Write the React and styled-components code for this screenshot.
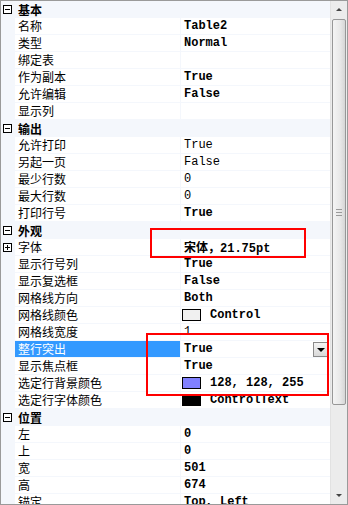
import React from "react";
import styled, { createGlobalStyle } from "styled-components";

const GlobalStyle = createGlobalStyle`
  html, body {
    margin: 0;
    padding: 0;
    background: #ffffff;
  }
`;

const LINE = "#f4f7fc";
const CJK = `"Noto Sans CJK SC", "Liberation Sans", sans-serif`;
const MONO = `"Liberation Mono", "Noto Sans CJK SC", monospace`;

const Frame = styled.div`
  position: relative;
  width: 348px;
  height: 505px;
  box-sizing: border-box;
  border: 1px solid #9a9a9a;
  display: flex;
  overflow: hidden;
  background: #fff;
`;

const Grid = styled.div`
  flex: 1;
  display: flex;
  flex-direction: column;
  overflow: hidden;
`;

const Row = styled.div`
  display: flex;
  height: 17px;
  flex-shrink: 0;
  background: ${(p) => (p.category ? LINE : "#fff")};
`;

const Gutter = styled.div`
  width: 14px;
  flex-shrink: 0;
  background: ${LINE};
  display: flex;
  align-items: center;
  padding-left: 2px;
  box-sizing: border-box;
`;

const Toggle = styled.div`
  width: 9px;
  height: 9px;
  box-sizing: border-box;
  border: 1px solid #000;
  position: relative;
  background: #fff;
  &::before {
    content: "";
    position: absolute;
    left: 1px;
    right: 1px;
    top: 3px;
    height: 1px;
    background: #000;
  }
  &::after {
    content: "";
    display: ${(p) => (p.open ? "none" : "block")};
    position: absolute;
    top: 1px;
    bottom: 1px;
    left: 3px;
    width: 1px;
    background: #000;
  }
`;

const CategoryLabel = styled.div`
  flex: 1;
  padding-left: 3px;
  font-family: ${CJK};
  font-size: 12px;
  font-weight: 700;
  line-height: 17px;
  color: #000;
`;

const NameCell = styled.div`
  width: 166px;
  flex-shrink: 0;
  box-sizing: border-box;
  padding-left: 3px;
  border-right: 1px solid ${LINE};
  border-bottom: 1px solid ${LINE};
  background: ${(p) => (p.selected ? "#3399ff" : "#fff")};
  color: ${(p) => (p.selected ? "#fff" : "#000")};
  font-family: ${CJK};
  font-size: 12px;
  line-height: 16px;
  white-space: nowrap;
`;

const ValueCell = styled.div`
  flex: 1;
  display: flex;
  align-items: center;
  padding-left: 3px;
  border-bottom: 1px solid ${LINE};
  font-family: ${MONO};
  font-size: 12px;
  font-weight: ${(p) => (p.bold ? 700 : 400)};
  color: #000;
  white-space: nowrap;
`;

const Swatch = styled.span`
  width: 19px;
  height: 12px;
  margin-left: -2px;
  margin-right: 9px;
  box-sizing: border-box;
  border: 1px solid #000;
  background: ${(p) => p.color};
  flex-shrink: 0;
`;

const DropButton = styled.div`
  margin-left: auto;
  margin-right: 1px;
  width: 16px;
  height: 15px;
  box-sizing: border-box;
  border: 1px solid #8a8a8a;
  background: linear-gradient(#f4f4f4, #d9d9d9);
  display: flex;
  align-items: center;
  justify-content: center;
  &::after {
    content: "";
    border-left: 4px solid transparent;
    border-right: 4px solid transparent;
    border-top: 4px solid #000;
    margin-top: 2px;
  }
`;

const ScrollBar = styled.div`
  width: 17px;
  flex-shrink: 0;
  background: #ececec;
  border-left: 1px solid #e2e2e2;
  box-sizing: border-box;
  display: flex;
  flex-direction: column;
  align-items: center;
`;

const Arrow = styled.div`
  height: 17px;
  width: 100%;
  flex-shrink: 0;
  display: flex;
  align-items: center;
  justify-content: center;
  &::after {
    content: "";
    border-left: 3px solid transparent;
    border-right: 3px solid transparent;
    ${(p) => (p.up ? "border-bottom" : "border-top")}: 3px solid #444;
  }
`;

const Thumb = styled.div`
  width: 14px;
  height: 386px;
  margin-top: 1px;
  box-sizing: border-box;
  border: 1px solid #979797;
  border-radius: 2px;
  background: linear-gradient(to right, #f4f4f4, #e8e8e8 60%, #d6d6d6);
  display: flex;
  align-items: center;
  justify-content: center;
`;

const Grip = styled.div`
  width: 6px;
  height: 7px;
  background: repeating-linear-gradient(#9a9a9a 0 1px, transparent 1px 3px);
`;

const Spacer = styled.div`
  flex: 1;
`;

const Highlight = styled.div`
  position: absolute;
  box-sizing: border-box;
  border: 2px solid #ff0000;
  pointer-events: none;
`;

const rows = [
  { cat: "基本" },
  { name: "名称", value: "Table2", bold: true },
  { name: "类型", value: "Normal", bold: true },
  { name: "绑定表", value: "" },
  { name: "作为副本", value: "True", bold: true },
  { name: "允许编辑", value: "False", bold: true },
  { name: "显示列", value: "" },
  { cat: "输出" },
  { name: "允许打印", value: "True" },
  { name: "另起一页", value: "False" },
  { name: "最少行数", value: "0" },
  { name: "最大行数", value: "0" },
  { name: "打印行号", value: "True", bold: true },
  { cat: "外观" },
  { name: "字体", value: "宋体，21.75pt", bold: true, expand: true },
  { name: "显示行号列", value: "True", bold: true },
  { name: "显示复选框", value: "False", bold: true },
  { name: "网格线方向", value: "Both", bold: true },
  { name: "网格线颜色", value: "Control", bold: true, swatch: "#f0f0f0" },
  { name: "网格线宽度", value: "1" },
  { name: "整行突出", value: "True", bold: true, selected: true },
  { name: "显示焦点框", value: "True", bold: true },
  { name: "选定行背景颜色", value: "128, 128, 255", bold: true, swatch: "#8080ff" },
  { name: "选定行字体颜色", value: "ControlText", bold: true, swatch: "#000000" },
  { cat: "位置" },
  { name: "左", value: "0", bold: true },
  { name: "上", value: "0", bold: true },
  { name: "宽", value: "501", bold: true },
  { name: "高", value: "674", bold: true },
  { name: "锚定", value: "Top, Left", bold: true },
];

const App = () => {
  return (
    <>
      <GlobalStyle />
      <Frame>
        <Grid>
          {rows.map((r, i) =>
            r.cat ? (
              <Row key={i} category>
                <Gutter>
                  <Toggle open />
                </Gutter>
                <CategoryLabel>{r.cat}</CategoryLabel>
              </Row>
            ) : (
              <Row key={i}>
                <Gutter>{r.expand && <Toggle />}</Gutter>
                <NameCell selected={r.selected}>{r.name}</NameCell>
                <ValueCell bold={r.bold}>
                  {r.swatch && <Swatch color={r.swatch} />}
                  {r.value}
                  {r.selected && <DropButton />}
                </ValueCell>
              </Row>
            )
          )}
        </Grid>
        <ScrollBar>
          <Arrow up />
          <Thumb>
            <Grip />
          </Thumb>
          <Spacer />
          <Arrow />
        </ScrollBar>
        <Highlight style={{ left: 149, top: 227, width: 156, height: 30 }} />
        <Highlight style={{ left: 145, top: 332, width: 183, height: 63 }} />
      </Frame>
    </>
  );
};

export default App;
